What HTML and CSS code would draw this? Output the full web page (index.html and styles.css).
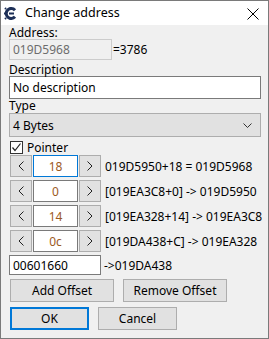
FILE: index.html
```html
<!DOCTYPE html>
<html lang="en">
<head>
    <meta charset="UTF-8">
    <title>Change address</title>
    <link rel="stylesheet" href="styles.css">
</head>
<body>
    <div class="window">
        <div class="titlebar">
            <svg class="app-icon" width="13" height="13" viewBox="0 0 13 13">
                <path d="M11 3.2 A5 5 0 1 0 11 9.8" fill="none" stroke="#1d2f57" stroke-width="3"/>
                <path d="M1 6.5 H0 M2 2 L1 1 M6.5 1 V0 M2 11 L1 12 M6.5 12 V13" stroke="#1d2f57" stroke-width="2"/>
                <rect x="5" y="5.5" width="5" height="2" fill="#1d2f57"/>
            </svg>
            <span class="title">Change address</span>
            <svg class="close" width="12" height="12" viewBox="0 0 12 12">
                <path d="M0.5 0.5 L11.5 11.5 M11.5 0.5 L0.5 11.5" stroke="#000" stroke-width="1"/>
            </svg>
        </div>

        <div class="content">
            <label class="lbl">Address:</label>
            <div class="addr-line">
                <input class="edit addr" type="text" value="019D5968" disabled>
                <span class="note">=3786</span>
            </div>

            <label class="lbl lbl-desc">Description</label>
            <input class="edit desc" type="text" value="No description">

            <label class="lbl lbl-type">Type</label>
            <div class="combo">
                <span>4 Bytes</span>
                <svg width="9" height="5" viewBox="0 0 9 5">
                    <polyline points="0.5,0.5 4.5,4.5 8.5,0.5" fill="none" stroke="#333" stroke-width="1"/>
                </svg>
            </div>

            <div class="check-line">
                <span class="checkbox">
                    <svg width="11" height="11" viewBox="0 0 11 11">
                        <polyline points="1.5,5.5 4,8.5 9.5,1.5" fill="none" stroke="#222" stroke-width="1.2"/>
                    </svg>
                </span>
                <span>Pointer</span>
            </div>

            <div class="offsets">
                <div class="offset-row">
                    <button class="arrow"><svg width="6" height="10" viewBox="0 0 6 10"><polyline points="5.5,0.5 1,5 5.5,9.5" fill="none" stroke="#222"/></svg></button>
                    <input class="edit offset focused" type="text" value="18">
                    <button class="arrow"><svg width="6" height="10" viewBox="0 0 6 10"><polyline points="0.5,0.5 5,5 0.5,9.5" fill="none" stroke="#222"/></svg></button>
                    <span class="note">019D5950+18 = 019D5968</span>
                </div>
                <div class="offset-row">
                    <button class="arrow"><svg width="6" height="10" viewBox="0 0 6 10"><polyline points="5.5,0.5 1,5 5.5,9.5" fill="none" stroke="#222"/></svg></button>
                    <input class="edit offset" type="text" value="0">
                    <button class="arrow"><svg width="6" height="10" viewBox="0 0 6 10"><polyline points="0.5,0.5 5,5 0.5,9.5" fill="none" stroke="#222"/></svg></button>
                    <span class="note">[019EA3C8+0] -&gt; 019D5950</span>
                </div>
                <div class="offset-row">
                    <button class="arrow"><svg width="6" height="10" viewBox="0 0 6 10"><polyline points="5.5,0.5 1,5 5.5,9.5" fill="none" stroke="#222"/></svg></button>
                    <input class="edit offset" type="text" value="14">
                    <button class="arrow"><svg width="6" height="10" viewBox="0 0 6 10"><polyline points="0.5,0.5 5,5 0.5,9.5" fill="none" stroke="#222"/></svg></button>
                    <span class="note">[019EA328+14] -&gt; 019EA3C8</span>
                </div>
                <div class="offset-row">
                    <button class="arrow"><svg width="6" height="10" viewBox="0 0 6 10"><polyline points="5.5,0.5 1,5 5.5,9.5" fill="none" stroke="#222"/></svg></button>
                    <input class="edit offset" type="text" value="0c">
                    <button class="arrow"><svg width="6" height="10" viewBox="0 0 6 10"><polyline points="0.5,0.5 5,5 0.5,9.5" fill="none" stroke="#222"/></svg></button>
                    <span class="note">[019DA438+C] -&gt; 019EA328</span>
                </div>
            </div>

            <div class="base-line">
                <input class="edit base" type="text" value="00601660">
                <span class="note">-&gt;019DA438</span>
            </div>

            <div class="btn-row">
                <button class="btn wide">Add Offset</button>
                <button class="btn wide">Remove Offset</button>
            </div>
            <div class="btn-row last">
                <button class="btn small default">OK</button>
                <button class="btn small">Cancel</button>
            </div>
        </div>
    </div>
</body>
</html>
```

FILE: styles.css
```css
body {
    margin: 0;
    font-family: 'Noto Sans', 'Open Sans', sans-serif;
    font-size: 12px;
    color: #000;
}

.window {
    width: 267px;
    height: 337px;
    border: 1px solid #7a7a7a;
    background: #f0f0f0;
}

.titlebar {
    height: 24px;
    background: #fff;
    display: flex;
    align-items: center;
    padding-left: 3px;
}

.app-icon {
    margin-top: 1px;
}

.title {
    margin-left: 8px;
    font-size: 12.5px;
    flex: 1;
    line-height: 24px;
}

.close {
    margin-right: 9px;
    margin-top: 2px;
}

.content {
    padding-left: 8px;
}

.lbl {
    display: block;
    height: 13px;
    line-height: 13px;
    margin-top: 1px;
}

.lbl-desc {
    height: 16px;
    line-height: 16px;
    margin-top: 0;
    padding-top: 2px;
    box-sizing: border-box;
}

.lbl-type {
    height: 14px;
    line-height: 13px;
    margin-top: 0;
}

.edit {
    box-sizing: border-box;
    font-family: inherit;
    font-size: 12px;
    border: 1px solid #7a7a7a;
    background: #fff;
    color: #000;
    padding: 0 3px;
    margin: 0;
    outline: none;
}

.addr-line,
.base-line {
    display: flex;
    align-items: center;
}

.addr {
    width: 103px;
    height: 21px;
    background: #f0f0f0;
    border-color: #cccccc;
    color: #6d6d6d;
}

.addr-line .note {
    margin-left: 1px;
}

.desc {
    display: block;
    width: 252px;
    height: 23px;
}

.combo {
    box-sizing: border-box;
    width: 252px;
    height: 24px;
    background: #e1e1e1;
    border: 1px solid #adadad;
    display: flex;
    align-items: center;
    justify-content: space-between;
    padding: 0 8px 0 3px;
}

.check-line {
    display: flex;
    align-items: center;
    height: 16px;
    margin-top: 2px;
}

.checkbox {
    box-sizing: border-box;
    width: 13px;
    height: 13px;
    border: 1px solid #333;
    background: #fff;
    display: flex;
    align-items: center;
    justify-content: center;
    margin-left: 1px;
    margin-right: 4px;
}

.offsets {
    display: flex;
    flex-direction: column;
    gap: 3px;
}

.offset-row {
    display: flex;
    align-items: center;
    height: 22px;
    padding-left: 1px;
}

.arrow {
    box-sizing: border-box;
    width: 22px;
    height: 22px;
    background: #e1e1e1;
    border: 1px solid #adadad;
    padding: 0;
    margin: 0;
    display: flex;
    align-items: center;
    justify-content: center;
}

.offset {
    width: 45px;
    height: 22px;
    margin: 0 1px;
    text-align: center;
    color: #9c5a1e;
}

.focused {
    border-color: #0078d7;
}

.offset-row .note {
    margin-left: 4px;
}

.base-line {
    margin-top: 3px;
}

.base {
    width: 92px;
    height: 20px;
}

.base-line .note {
    margin-left: 3px;
}

.btn-row {
    display: flex;
    gap: 9px;
    margin-top: 4px;
    padding-left: 1px;
}

.btn-row.last {
    margin-top: 5px;
}

.btn {
    box-sizing: border-box;
    height: 23px;
    background: #e1e1e1;
    border: 1px solid #adadad;
    font-family: inherit;
    font-size: 12px;
    color: #000;
    padding: 0;
}

.wide {
    width: 104px;
}

.small {
    width: 79px;
}

.default {
    border: 2px solid #0078d7;
}
```
